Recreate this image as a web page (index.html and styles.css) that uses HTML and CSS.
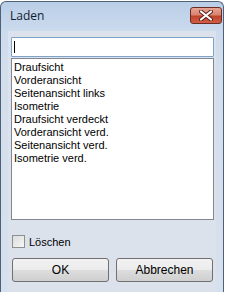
FILE: index.html
```html
<!DOCTYPE html>
<html>
<head>
<meta charset="utf-8">
<link rel="stylesheet" href="styles.css">
</head>
<body>
<div class="window">
  <div class="titlebar">
    <span class="title">Laden</span>
    <div class="close">
      <svg width="14" height="11" viewBox="0 0 14 11">
        <path d="M2 1.5 L12 9.5 M12 1.5 L2 9.5" stroke="#5a2018" stroke-width="4" stroke-linecap="round"/>
        <path d="M2 1.5 L12 9.5 M12 1.5 L2 9.5" stroke="#ffffff" stroke-width="2.2" stroke-linecap="round"/>
      </svg>
    </div>
  </div>
  <div class="client">
    <div class="field"><span class="caret"></span></div>
    <ul class="list">
      <li>Draufsicht</li>
      <li>Vorderansicht</li>
      <li>Seitenansicht links</li>
      <li>Isometrie</li>
      <li>Draufsicht verdeckt</li>
      <li>Vorderansicht verd.</li>
      <li>Seitenansicht verd.</li>
      <li>Isometrie verd.</li>
    </ul>
    <label class="check"><span class="box"></span><span>Löschen</span></label>
    <div class="buttons">
      <div class="btn">OK</div>
      <div class="btn">Abbrechen</div>
    </div>
  </div>
</div>
</body>
</html>
```
FILE: styles.css
```css
html, body {
  margin: 0;
  padding: 0;
  background: #ffffff;
  width: 227px;
  height: 292px;
  overflow: hidden;
}
body {
  padding-top: 1px;
  font-family: "Liberation Sans", Arial, sans-serif;
  font-size: 11px;
  color: #000;
}
.window {
  width: 222px;
  height: 300px;
  border: 1px solid #4e6078;
  border-bottom: none;
  border-radius: 6px 6px 0 0;
  background: linear-gradient(to bottom, #b9cee7 0px, #cbdaed 28px, #d3deec 60px, #d7e0ed 100%);
  display: flex;
  flex-direction: column;
}
.titlebar {
  height: 28px;
  display: flex;
  align-items: flex-start;
  justify-content: space-between;
  padding-left: 9px;
  padding-right: 1px;
}
.title {
  font-family: "Open Sans", "Noto Sans", sans-serif;
  font-size: 12px;
  color: #101c30;
  margin-top: 5px;
}
.close {
  width: 30px;
  height: 15px;
  margin-top: 5px;
  border: 1px solid #6b2a22;
  border-radius: 3px;
  background: linear-gradient(to bottom, #e8a496 0%, #d98470 45%, #c0432a 55%, #cf5f44 100%);
  display: flex;
  align-items: center;
  justify-content: center;
}
.close svg { display: block; }
.client {
  margin: 1px 7px 0 7px;
  background: #dce2ec;
  flex: 1;
  display: flex;
  flex-direction: column;
  padding: 6px 2px 0 3px;
}
.field {
  height: 18px;
  border: 1px solid #7ea3c9;
  border-radius: 1px;
  background: #fff;
  display: flex;
  align-items: center;
  padding-left: 2px;
}
.caret {
  width: 1px;
  height: 12px;
  background: #000;
}
.list {
  list-style: none;
  margin: 1px 0 0 0;
  padding: 2px 0 0 2px;
  height: 158px;
  border: 1px solid #828790;
  background: #fff;
}
.list li {
  height: 13px;
  line-height: 13px;
}
.check {
  display: flex;
  align-items: center;
  margin-top: 15px;
  margin-left: 1px;
  height: 13px;
}
.box {
  width: 11px;
  height: 11px;
  border: 1px solid #8e8f8f;
  background: linear-gradient(135deg, #dcdcdc, #f6f6f6);
  margin-right: 4px;
}
.buttons {
  display: flex;
  gap: 7px;
  margin-top: 10px;
  margin-left: 1px;
}
.btn {
  width: 95px;
  height: 22px;
  border: 1px solid #707070;
  border-radius: 3px;
  background: linear-gradient(to bottom, #f2f2f2 0%, #ebebeb 50%, #dddddd 51%, #cfcfcf 100%);
  display: flex;
  align-items: center;
  justify-content: center;
  font-size: 12px;
}
```
